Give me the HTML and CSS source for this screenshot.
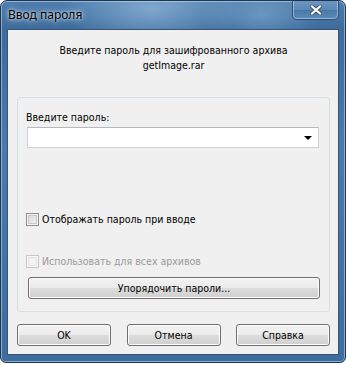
FILE: index.html
```html
<!DOCTYPE html>
<html lang="ru">
<head>
    <meta charset="UTF-8">
    <title>Ввод пароля</title>
    <link rel="stylesheet" href="styles.css">
</head>
<body>
    <!--window frame with glass title bar-->
    <div class="window">
        <div class="titlebar">
            <span class="title">Ввод пароля</span>
            <div class="close-btn">
                <svg width="12" height="10" viewBox="0 0 12 10">
                    <path d="M2 1.5 L10 8.5 M10 1.5 L2 8.5" stroke="#3a4a5c" stroke-width="3.8" stroke-linecap="square"/>
                    <path d="M2 1.5 L10 8.5 M10 1.5 L2 8.5" stroke="#fff" stroke-width="2.2" stroke-linecap="square"/>
                </svg>
            </div>
        </div>

        <!--dialog content-->
        <div class="client">
            <div class="message">
                <div>Введите пароль для зашифрованного архива</div>
                <div>getImage.rar</div>
            </div>

            <div class="group">
                <div class="label">Введите пароль:</div>
                <div class="combo">
                    <span class="arrow"></span>
                </div>

                <div class="check-row first">
                    <span class="checkbox"></span>
                    <span>Отображать пароль при вводе</span>
                </div>

                <div class="check-row disabled">
                    <span class="checkbox"></span>
                    <span>Использовать для всех архивов</span>
                </div>

                <div class="button wide">Упорядочить пароли...</div>
            </div>

            <div class="buttons">
                <div class="button">OK</div>
                <div class="button">Отмена</div>
                <div class="button">Справка</div>
            </div>
        </div>
    </div>
</body>
</html>
```

FILE: styles.css
```css
body {
    margin: 0;
    background: #fff;
}

/* Window frame, glass look */
.window {
    width: 346px;
    height: 363px;
    box-sizing: border-box;
    border: 1px solid #1e3550;
    border-radius: 7px 7px 6px 6px;
    background:
        radial-gradient(ellipse 90px 40px at 150px 8px, rgba(170, 205, 235, 0.55), rgba(170, 205, 235, 0) 100%),
        radial-gradient(ellipse 60px 30px at 260px 14px, rgba(160, 200, 230, 0.4), rgba(160, 200, 230, 0) 100%),
        linear-gradient(180deg, #4f7eae 0%, #3c6b9c 8%, #4a7aaa 40%, #3d6d9e 100%);
    box-shadow: inset 0 0 0 1px rgba(200, 225, 245, 0.55);
    overflow: hidden;
}

.titlebar {
    height: 28px;
    display: flex;
    align-items: flex-start;
    justify-content: space-between;
}

.title {
    font-family: "Noto Sans", "Open Sans", sans-serif;
    font-size: 12px;
    color: #000;
    padding: 5px 0 0 7px;
    text-shadow: 0 0 6px rgba(255, 255, 255, 0.9), 0 0 3px rgba(255, 255, 255, 0.8);
}

/* close button (inactive look) */
.close-btn {
    width: 45px;
    height: 19px;
    margin-right: 6px;
    margin-top: -1px;
    border: 1px solid #2f5070;
    border-top: none;
    border-radius: 0 0 5px 5px;
    background: linear-gradient(180deg, #7099c2 0%, #5a88b6 50%, #4a78a6 51%, #5a8aba 100%);
    box-shadow: inset 0 0 0 1px rgba(210, 230, 250, 0.5);
    display: flex;
    align-items: center;
    justify-content: center;
}

.client {
    margin: 0 6px;
    height: 326px;
    box-sizing: border-box;
    border: 1px solid #3a5472;
    background: #f0f0f0;
    padding: 0 8px 0 9px;
    font-family: "DejaVu Sans Condensed", "DejaVu Sans", sans-serif;
    font-stretch: condensed;
    font-size: 10.5px;
    color: #000;
}

.message {
    text-align: center;
    padding-top: 13px;
    line-height: 15px;
}

/* Group box */
.group {
    margin-top: 24px;
    height: 215px;
    box-sizing: border-box;
    border: 1px solid #d5dfe5;
    border-radius: 3px;
    padding: 12px 10px 0 9px;
}

.label {
    line-height: 14px;
    margin-left: -1px;
}

.combo {
    margin-top: 3px;
    height: 21px;
    box-sizing: border-box;
    background: #fff;
    border: 1px solid #cdd2d8;
    border-top-color: #b4b9c0;
    display: flex;
    align-items: center;
    justify-content: flex-end;
    padding-right: 6px;
}

.arrow {
    width: 0;
    height: 0;
    border-left: 4px solid transparent;
    border-right: 4px solid transparent;
    border-top: 4px solid #000;
}

.check-row {
    display: flex;
    align-items: center;
    gap: 3px;
    line-height: 14px;
    margin-top: 28px;
    margin-left: -1px;
}

.check-row.first {
    margin-top: 64px;
}

.checkbox {
    width: 13px;
    height: 13px;
    box-sizing: border-box;
    border: 1px solid #8e8f8f;
    background: linear-gradient(135deg, #d6d6d6 0%, #f4f4f4 100%);
    box-shadow: inset 0 0 0 1px #f4f4f4, inset 0 0 0 2px #c9c9c9;
}

.check-row.disabled {
    color: #9a9a9a;
}

.check-row.disabled .checkbox {
    border-color: #c8c8c8;
    background: #f2f2f2;
    box-shadow: inset 0 0 0 1px #f7f7f7, inset 0 0 0 2px #e4e4e4;
}

/* Windows 7 push button */
.button {
    height: 22px;
    box-sizing: border-box;
    border: 1px solid #707070;
    border-radius: 3px;
    background: linear-gradient(180deg, #f2f2f2 0%, #ebebeb 50%, #dddddd 51%, #cfcfcf 100%);
    box-shadow: inset 0 0 0 1px #fcfcfc;
    display: flex;
    align-items: center;
    justify-content: center;
}

.button.wide {
    margin-top: 9px;
    margin-left: 1px;
    width: 292px;
}

.buttons {
    display: flex;
    justify-content: space-between;
    margin-top: 12px;
    width: 313px;
}

.buttons .button {
    width: 94px;
}
```
